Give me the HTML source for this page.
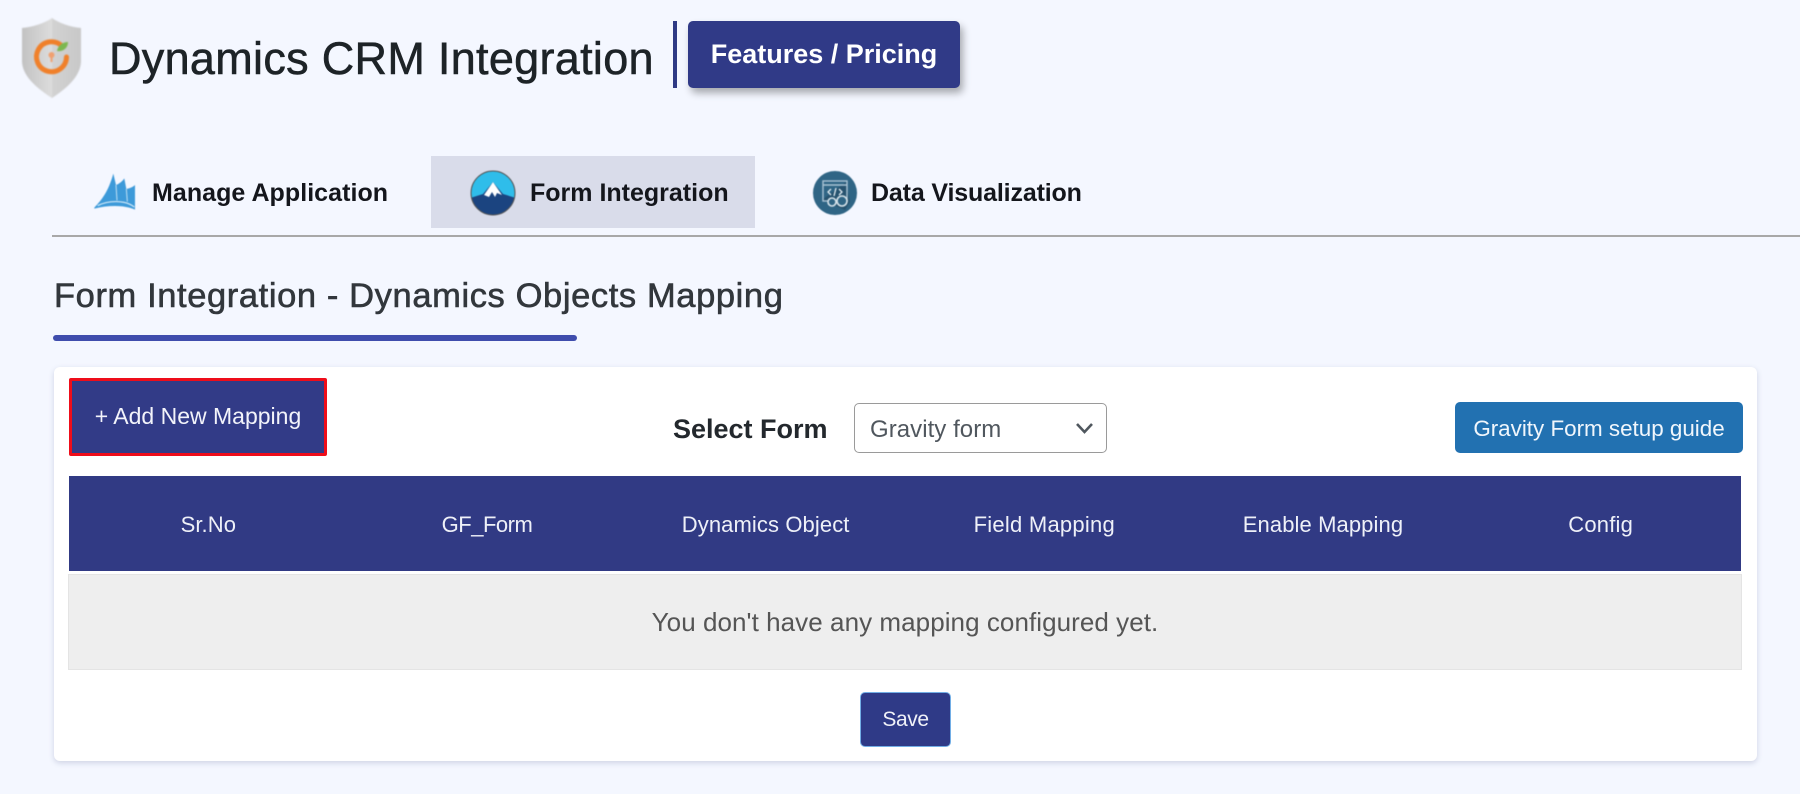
<!DOCTYPE html>
<html lang="en">
<head>
<meta charset="utf-8">
<title>Dynamics CRM Integration</title>
<style>
*{box-sizing:border-box}
html,body{margin:0;padding:0;width:1800px;height:794px;overflow:hidden;background:#f4f7ff;font-family:"Liberation Sans",Arial,sans-serif}
.a{position:absolute;white-space:nowrap}
.c{display:flex;align-items:center;justify-content:center}
svg{display:block}
h1,h2{margin:0;font-weight:400}
table{border-collapse:collapse;table-layout:fixed}
th{font-weight:400;padding:2px 0 0;width:16.666%}
</style>
</head>
<body>

<svg class="a" style="left:18px;top:14px;filter:blur(.8px)" width="68" height="88" viewBox="0 0 68 88">
<defs>
<linearGradient id="sh" x1="0" x2="1" y1="0" y2="0"><stop offset="0" stop-color="#c2c2c2"/><stop offset=".5" stop-color="#dcdcdc"/><stop offset=".52" stop-color="#d2d2d2"/><stop offset="1" stop-color="#c8c8c8"/></linearGradient>
</defs>
<path d="M34 4C27 9 15 13 4 14V48C5 64 22 76 34 84C46 76 62 64 63 48V14C52 13 41 9 34 4Z" fill="url(#sh)"/>
<path d="M44 32A15 15 0 1 0 48.500 43" fill="none" stroke="#f0802a" stroke-width="5" stroke-linecap="round"/>
<circle cx="33.500" cy="41" r="3" fill="#f0a070"/><rect x="32.500" y="42" width="2" height="6" fill="#f0a070"/>
<path d="M39 37C40 31 45 28 50 28C50 34 45 38 39 37Z" fill="#7cb850"/>
</svg>
<h1 class="a" style="left:109px;top:33px;font-size:45px;line-height:52px;letter-spacing:.3px;color:#1d2327;-webkit-text-stroke:.55px #1d2327">Dynamics CRM Integration</h1>
<div class="a" style="left:673px;top:21px;width:4px;height:67px;background:#2f3a85"></div>
<div class="a c" style="left:688px;top:21px;width:272px;height:67px;background:#303a87;border-radius:5px;box-shadow:3px 5px 8px rgba(0,0,0,.32);color:#fff;font-weight:700;font-size:27px">Features / Pricing</div>

<div class="a" style="left:431px;top:156px;width:324px;height:72px;background:#d9dcea"></div>
<div class="a" style="left:52px;top:235px;width:1748px;height:2px;background:#a8a8a8"></div>

<svg class="a" style="left:85px;top:165px;filter:blur(.5px)" width="65" height="55" viewBox="0 0 195 165">
<path d="M28 128C50 105 70 80 85 26L93 60C103 56 113 48 118 40L124 72C134 70 144 66 150 60V134C120 120 70 120 28 131Z" fill="#3d9ad9"/>
<path d="M93 60L96 106M124 72L127 110" stroke="#bfe0f5" stroke-width="3" fill="none"/>
<path d="M38 122C70 106 120 104 148 126" stroke="#cfe8f8" stroke-width="3.500" fill="none"/>
</svg>
<div class="a c" style="left:152px;top:173px;height:40px;font-size:25px;font-weight:700;letter-spacing:.05px;color:#14161c">Manage Application</div>

<svg class="a" style="left:470px;top:170px;filter:blur(.4px)" width="46" height="46" viewBox="0 0 46 46">
<defs><clipPath id="cp"><circle cx="23" cy="23" r="22"/></clipPath></defs>
<g clip-path="url(#cp)">
<rect width="46" height="46" fill="#2fbdea"/>
<path d="M0 28L13 24L23 12L33 24L46 28V46H0Z" fill="#1b4480"/>
<path d="M23 12L32 25L27 23L25 27L22 22L19 27L14 25Z" fill="#fff"/>
</g>
<circle cx="23" cy="23" r="22" fill="none" stroke="#555" stroke-width="1"/>
</svg>
<div class="a c" style="left:530px;top:173px;height:40px;font-size:25px;font-weight:700;color:#14161c">Form Integration</div>

<svg class="a" style="left:812px;top:170px;filter:blur(.6px)" width="46" height="46" viewBox="0 0 46 46">
<circle cx="23" cy="23" r="22" fill="#2f6585"/>
<path d="M10 30L33 40L38 32L34 12Z" fill="#27536f"/>
<rect x="11" y="11" width="24" height="20" fill="none" stroke="#a9c3d4" stroke-width="1.400"/>
<path d="M11 15H35" stroke="#a9c3d4" stroke-width="1.400"/>
<path d="M19 19L16 22L19 25M27 19L30 22L27 25M24 18L22 26" fill="none" stroke="#e2ecf2" stroke-width="1.300"/>
<circle cx="20" cy="32" r="4" fill="#2f6585" stroke="#d6e3ea" stroke-width="1.600"/>
<circle cx="30" cy="31" r="5" fill="#2f6585" stroke="#d6e3ea" stroke-width="1.600"/>
</svg>
<div class="a c" style="left:871px;top:173px;height:40px;font-size:25px;font-weight:700;letter-spacing:-.15px;color:#14161c">Data Visualization</div>

<h2 class="a" style="left:54px;top:276px;font-size:34.500px;line-height:40px;letter-spacing:.6px;color:#32373c;-webkit-text-stroke:.6px #32373c">Form Integration - Dynamics Objects Mapping</h2>
<div class="a" style="left:53px;top:335px;width:524px;height:6px;border-radius:3px;background:#3f4dad"></div>

<div class="a" style="left:54px;top:367px;width:1703px;height:394px;background:#fff;border-radius:6px;box-shadow:0 2px 6px rgba(60,70,120,.2)"></div>

<div class="a c" style="left:69px;top:378px;width:258px;height:78px;background:#323b87;border:3px solid #ee0d1a;border-radius:2px;color:#f2f3fa;font-size:23px;padding-bottom:2px">+ Add New Mapping</div>

<div class="a c" style="left:673px;top:409px;height:40px;font-size:27px;font-weight:700;color:#23282d">Select Form</div>

<div class="a" style="left:854px;top:403px;width:253px;height:50px;border:1.500px solid #9a9a9a;border-radius:5px;background:#fff"></div>
<div class="a c" style="left:870px;top:410px;height:40px;font-size:24px;letter-spacing:.05px;color:#50575e">Gravity form</div>
<svg class="a" style="left:1074px;top:421px" width="21" height="15" viewBox="0 0 21 15"><path d="M3 3L10.500 11L18 3" fill="none" stroke="#50575e" stroke-width="2.600"/></svg>

<div class="a c" style="left:1455px;top:402px;width:288px;height:51px;background:#2271b1;border-radius:5px;color:#f0f6fc;font-size:22.400px;padding-top:2px">Gravity Form setup guide</div>

<table class="a" style="left:69px;top:476px;width:1672px;height:95px;background:#313a84;color:#eef0f8;font-size:22px;letter-spacing:.1px">
<tr>
<th>Sr.No</th><th style="letter-spacing:-.5px">GF_Form</th><th>Dynamics Object</th><th style="letter-spacing:.25px">Field Mapping</th><th>Enable Mapping</th><th style="letter-spacing:.2px;padding-right:2px">Config</th>
</tr>
</table>

<div class="a c" style="left:68px;top:574px;width:1674px;height:96px;background:#eeeeee;border:1px solid #e4e4e4;color:#555;font-size:26px;letter-spacing:.06px">You don't have any mapping configured yet.</div>

<div class="a c" style="left:860px;top:692px;width:91px;height:55px;background:#2f3a87;border:1px solid #72aee6;border-radius:5px;color:#f0f1f8;font-size:21px;letter-spacing:-.4px">Save</div>

</body>
</html>
